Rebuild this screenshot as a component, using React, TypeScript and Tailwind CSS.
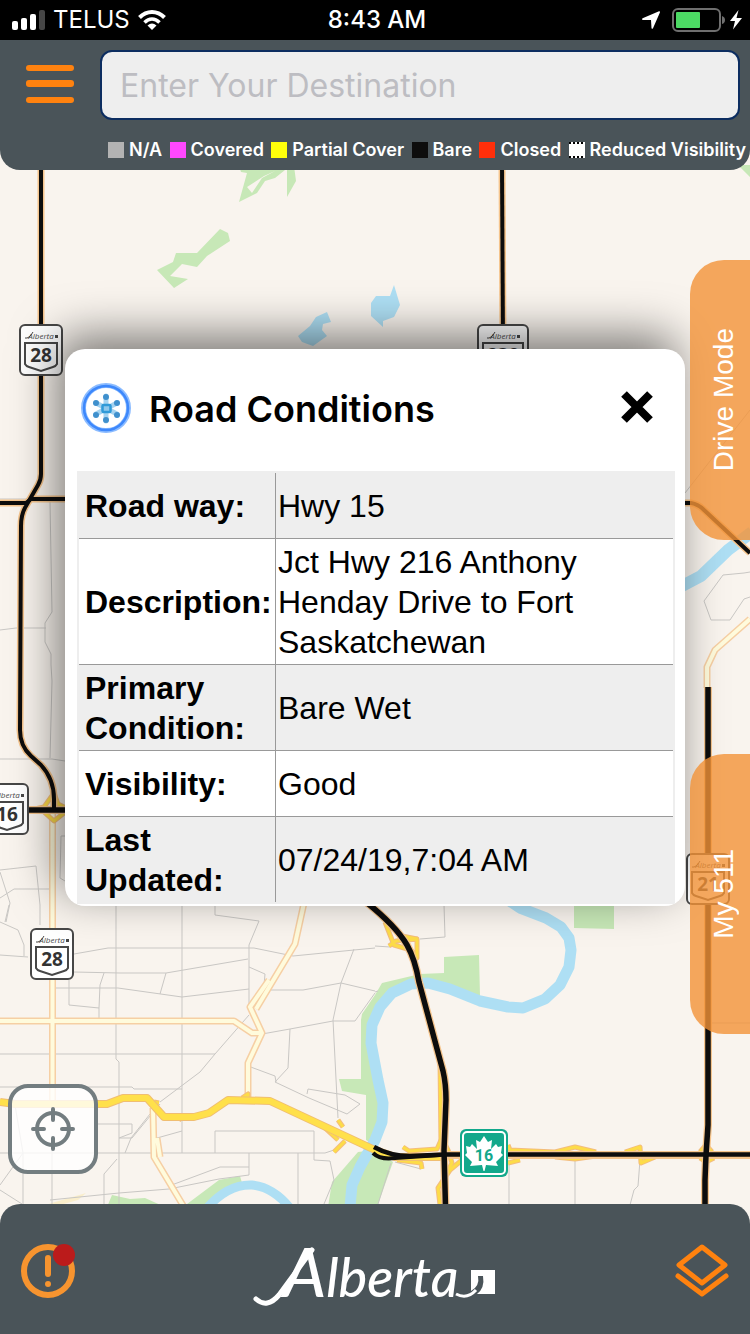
import React from 'react';

const legend = [
  { label: 'N/A', swatch: 'bg-[#b3b3b3]' },
  { label: 'Covered', swatch: 'bg-[#ff48ff]' },
  { label: 'Partial Cover', swatch: 'bg-[#ffff0a]' },
  { label: 'Bare', swatch: 'bg-[#0d0d0d]' },
  { label: 'Closed', swatch: 'bg-[#ff2f0a]' },
  { label: 'Reduced Visibility', swatch: 'bg-white', dashed: true },
];

const details = [
  { label: 'Road way:', value: 'Hwy 15' },
  { label: 'Description:', value: 'Jct Hwy 216 Anthony Henday Drive to Fort Saskatchewan' },
  { label: 'Primary Condition:', value: 'Bare Wet' },
  { label: 'Visibility:', value: 'Good' },
  { label: 'Last Updated:', value: '07/24/19,7:04 AM' },
];

const localRoads = [
  'M0 499H30M50 501L52 612 45 623V642L51 654V665L52 681 50 758',
  'M0 630L16 628H46M0 759H52L65 761',
  'M65 836H61L60 878 65 881M0 870L36 866 40 905V925M0 872L10 903 6 922M0 898L14 889H50',
  'M0 922L18 930 24 945V956M0 955L28 957M9 905L5 922',
  'M74 954L108 948H254L293 956 354 950 375 948M116 905V1059L119 1062V1205M182 905V1153',
  'M215 905V915L259 921 249 945V1007M74 972L120 973H166L248 959M166 973L160 994',
  'M55 988H118L182 997 249 989M69 980V1005L99 1008V1019M99 1008L100 985 104 973',
  'M249 967L265 974 264 985M270 990H303L341 983 375 991M354 949L341 983 333 1020 338 1118',
  'M262 1034L290 1029 333 1021 355 1021 375 993M290 1029L288 1068 275 1082 309 1098',
  'M0 1054H215L249 1015M215 1054L200 1072 160 1102M0 1087H132L134 1089H182',
  'M248 1066L275 1076 276 1082M307 1094L308 1089 345 1095 360 1104 347 1114 309 1098',
  'M98 1124H132V1133L119 1138H132L160 1104M182 1131L157 1138M150 1114L131 1138 125 1153',
  'M215 1153V1131H314V1160L330 1161 334 1180 324 1204M0 1153H325L334 1150M298 1153V1205',
  'M249 1153V1175L219 1179 169 1189 119 1193 50 1200M249 1167H220L169 1186',
  'M104 1205V1174L117 1159M15 1105L23 1153 0 1185M52 1150V1205M0 1190L22 1204M23 1153V1205',
  'M444 905L445 937 420 939M375 946L390 947M375 992L378 991M509 1160V1205M575 1160V1205',
  'M640 1160L638 1186 634 1190 630 1205M395 1162L421 1169M391 1163L378 1204',
  'M685 493L750 410M750 572L744 573 723 575 704 601 711 620H730L744 599 750 597M712 1023H750',
];

const paleRoads = [
  'M52.5 812V1102',
  'M0 1021H234L252 1033H262',
  'M304 903L295 944 256 1009',
  'M269 980L250 1007 262 1033 248 1063V1099',
  'M153 1108L154 1157 184 1207M157 1138L160 1157',
  'M750 619L715 650 707 667V688',
];

const ramps = [
  'M30 810L44 807 54 793 58 804 66 808M44 812L54 821 64 813',
  'M385 922L394 945 411 950 417 958V939L402 936M389 946L396 941 418 939',
  'M375 1152L400 1158 450 1154M403 1147L409 1151 437 1149 442 1138 448 1150 452 1163 446 1175',
  'M397 1160L421 1163 422 1169M440 1205L438 1188 450 1170 462 1160',
  'M508 1145L510 1150 555 1152 575 1147 596 1152M508 1163L520 1160M555 1157L575 1159 596 1156',
  'M625 1152L640 1147 641 1163 655 1157M700 1152L706 1145 712 1152M700 1158L706 1162 714 1158',
  'M325 1128L338 1140M334 1152L345 1141M338 1120L343 1127M242 1098L248 1094 248 1104',
  'M154 1102L159 1103M178 1117L182 1120M440 1060L441 1145',
];

const darkRoads = [
  'M41 165V474Q41 480 38 485L26 506Q21 514 21 526L20 730Q20 746 31 756L41 765Q54 779 54 799V810',
  'M502 165L503 345',
  'M0 503H26L31 499H66',
  'M684 503H691Q698 504 704 510L750 553',
];

const wideDarkRoads = [
  'M28 810H66',
  'M366 902Q396 926 407 945 415 959 419 982L443 1071Q446 1084 446 1100L444 1150 445.5 1207',
  'M708 687L708 1125 706 1155 705 1180V1207',
];

type SignProps = { x: number; y: number; label: string; width?: number };

function HighwaySign({ x, y, label, width = 42 }: SignProps) {
  const half = width / 2;
  const inner = half - 6;
  return (
    <g transform={`translate(${x} ${y})`} fill="#fff" stroke="#474747" strokeWidth="2">
      <rect x={-half} y={-25} width={width} height={50} rx="5" />
      <path d={`M${-inner - 1} -7H${inner + 1}V14Q${inner} 16 ${inner - 3} 17L0 21 ${3 - inner} 17Q${-inner} 16 ${-inner - 1} 14Z`} />
      <path d="M-16 -12Q-12 -11 -8 -18" fill="none" strokeWidth="1" />
      <rect x="14" y="-15" width="3" height="3" fill="#474747" stroke="none" />
      <text x="0" y="-11" textAnchor="middle" fontSize="8" fontStyle="italic" fill="#474747" stroke="none">Alberta</text>
      <text x="0" y="12" textAnchor="middle" fontSize="19" fontWeight="700" fill="#333" stroke="none">{label}</text>
    </g>
  );
}

function RoadMap() {
  return (
    <svg
      className="absolute inset-0 h-full w-full font-['Open_Sans',sans-serif]"
      viewBox="0 0 750 1334"
      preserveAspectRatio="xMidYMid slice"
      fill="none"
      aria-hidden="true"
    >
      <rect width="750" height="1334" fill="#f9f4ee" />

      {/* Parks */}
      <g fill="#c7e8b7">
        <path fillRule="evenodd" d="M239 166L241 172 247 173 239 202 257 193 265 181 275 178 290 166ZM247 187L252 193 262 178 275 171 264 176Z" />
        <path d="M287 166V197L296 181 294 166ZM738 165H750V177Z" />
        <path d="M157 270L173 262 176 253H197L220 229 228 233 230 241 207 256 197 267 182 264 170 276 188 279 174 288Z" />
        <path d="M574 900H614V929L574 928Z" />
        <path d="M361 1020L362 1014 375 995 382 983 420 974 444 973V957L479 955 480 996 440 985 400 987 374 1014 372 1050 382 1100 374 1145 366 1140V1095L342 1091 339 1079H361Z" />
        <path d="M328 1207L332 1182 345 1167 358 1152 375 1150 393 1162 377 1207Z" />
        <path d="M107 1207L112 1195 130 1199 145 1198 165 1207ZM183 1207L219 1180 240 1176 244 1190 284 1207Z" />
      </g>
      <path d="M45 1205L86 1193 78 1200 60 1205Z" fill="#faeecb" />
      <path d="M205 1210L222 1194 240 1187H262L278 1194 290 1210Z" fill="#f9f4ee" />

      {/* Water */}
      <g fill="#aedff4">
        <path d="M298 336L310 326 316 317 327 312 331 322 323 324 322 330 327 336 313 346 302 342Z" />
        <path d="M371 303L376 296H390L394 285 400 305 394 317 383 321V327L371 316Z" />
      </g>
      <g stroke="#aedff4" strokeLinejoin="round">
        <path strokeWidth="11" d="M505 898L520 908 546 918 561 927 569 938 571 950 569 967 560 985 545 999 523 1008 508 1007 480 1001 450 989 428 983 411 984 392 993 380 1007 372 1025 371 1043 378 1080 383 1103 382 1122 375 1140 360 1167 352 1185 350 1207" />
        <path strokeWidth="12" d="M682 586L701 576 728 550 752 532" />
        <path strokeWidth="9" d="M207 1208Q228 1184 252 1185 273 1187 290 1208" />
      </g>

      {/* Local streets */}
      <g stroke="#c9c7c4" strokeWidth="1">
        {localRoads.map((d) => <path key={d} d={d} />)}
      </g>

      {/* Secondary roads */}
      <g stroke="#f6cfa4" strokeWidth="7" strokeLinejoin="round">
        {paleRoads.map((d) => <path key={d} d={d} />)}
      </g>
      <g stroke="#fffbdc" strokeWidth="4" strokeLinejoin="round">
        {paleRoads.map((d) => <path key={d} d={d} />)}
      </g>

      {/* Yellowhead trail and ramps */}
      <g strokeLinejoin="round">
        <g stroke="#f3bd7e" strokeWidth="5">
          {ramps.map((d) => <path key={d} d={d} />)}
        </g>
        <g stroke="#fddc48" strokeWidth="3">
          {ramps.map((d) => <path key={d} d={d} />)}
        </g>
        <path stroke="#f0be72" strokeWidth="8" d="M0 1102L15 1104H107L123 1098H147L164 1117H194L209 1113 228 1100 270 1101 375 1150 395 1157H445" />
        <path stroke="#ffe04a" strokeWidth="6" d="M0 1102L15 1104H107L123 1098H147L164 1117H194L209 1113 228 1100 270 1101 375 1150 395 1157H445" />
      </g>

      {/* Bare pavement highways */}
      <g stroke="#f5c48c" strokeLinejoin="round">
        {darkRoads.map((d) => <path key={d} d={d} strokeWidth="7" />)}
        {wideDarkRoads.map((d) => <path key={d} d={d} strokeWidth="8" />)}
        <path d="M440 1155H750" strokeWidth="8" />
      </g>
      <g stroke="#0d0d0d" strokeLinejoin="round">
        {darkRoads.map((d) => <path key={d} d={d} strokeWidth="4" />)}
        {wideDarkRoads.map((d) => <path key={d} d={d} strokeWidth="5.500" />)}
        <path d="M374 1147Q390 1156 410 1156L445 1154.500H750" strokeWidth="4.500" />
        <path d="M373 1153Q380 1160 395 1158L440 1155" strokeWidth="4" />
      </g>

      <HighwaySign x={41} y={350} label="28" />
      <HighwaySign x={503} y={350} label="830" width={50} />
      <HighwaySign x={7} y={809} label="16" />
      <HighwaySign x={708} y={879} label="21" />
      <HighwaySign x={52} y={954} label="28" />

      {/* Trans-Canada marker */}
      <g transform="translate(460 1129)">
        <rect width="48" height="48" rx="6" fill="#12a88b" />
        <rect x="3" y="3" width="42" height="42" rx="4" stroke="#fff" strokeWidth="2" />
        <path
          fill="#fff"
          d="M24 7L28 13 32 11 31 20 36 15 38 18 42 17 41 24 43 26 36 33 38 37 26 36 24.500 42H23.500L22 36 10 37 12 33 5 26 7 24 6 17 10 18 12 15 17 20 16 11 20 13Z"
        />
        <text x="24" y="32" textAnchor="middle" fontSize="16" fontWeight="700" fill="#12a88b" className="font-['Roboto',sans-serif]">16</text>
      </g>
    </svg>
  );
}

function StatusBar() {
  return (
    <div className="relative grid h-10 grid-cols-3 items-center bg-black px-3 text-2xl text-white">
      <div className="flex items-center gap-2">
        <svg width="33" height="20" viewBox="0 0 33 20" fill="#fff">
          <rect y="11" width="6" height="9" rx="2" />
          <rect x="9" y="8" width="6" height="12" rx="2" />
          <rect x="18" y="4" width="6" height="16" rx="2" />
          <rect x="27" width="6" height="20" rx="2" fill="#464646" />
        </svg>
        <span>TELUS</span>
        <svg width="28" height="20" viewBox="0 0 28 20" fill="none" stroke="#fff" strokeWidth="4">
          <path d="M1.500 7.500Q7 2 14 2T26.500 7.500" />
          <path d="M6.500 12.500Q10 9 14 9T21.500 12.500" strokeWidth="3.500" />
          <path d="M9.500 15.500Q14 11.500 18.500 15.500L14 20Z" fill="#fff" stroke="none" />
        </svg>
      </div>
      <span className="pl-1 text-center font-medium">8:43 AM</span>
      <div className="-mr-1 flex items-center justify-end gap-1">
        <svg className="mr-2" width="18" height="18" viewBox="0 0 18 18" fill="#fff">
          <path d="M17 .3Q18.300 0 17.900 1.500L11 17.200Q10 18.600 9.500 17L9 9H1Q-.8 8.300 .6 7.200Z" />
        </svg>
        <svg width="54" height="24" viewBox="0 0 54 24" fill="none">
          <rect x="1" y="1" width="47" height="22" rx="5" stroke="#6f6f6f" strokeWidth="2" />
          <rect x="4" y="4" width="24" height="16" rx="1" fill="#4cd964" />
          <path d="M50 8Q53 9 53 12T50 16Z" fill="#6f6f6f" />
        </svg>
        <svg width="12" height="20" viewBox="0 0 12 20" fill="#fff">
          <path d="M8.500 0L0 11H5L3 19.500 12 8H6.500Z" />
        </svg>
      </div>
    </div>
  );
}

function AlbertaLogo() {
  return (
    <svg width="240" height="64" viewBox="0 0 240 64" role="img" aria-label="Alberta" className="overflow-visible font-['Lato',sans-serif]">
      <path d="M1 55Q12 65 24 51L57 6" fill="none" stroke="#fff" strokeWidth="5" strokeLinecap="round" />
      <text x="28" y="53" fontStyle="italic" fontWeight="500" fill="#fff">
        <tspan fontSize="68">A</tspan>
        <tspan fontSize="54">lberta</tspan>
      </text>
      <path d="M216 26H240V50H222Q230 44 228 32H223Q225 42 216 47Z" fill="#fff" />
      <path d="M201 50Q212 56 221 46" fill="none" stroke="#fff" strokeWidth="3" />
    </svg>
  );
}

function SnowflakeBadge() {
  return (
    <svg width="50" height="50" viewBox="0 0 50 50" fill="none" aria-hidden="true">
      <circle cx="25" cy="25" r="22.500" stroke="#8cbcff" strokeWidth="5" />
      <circle cx="25" cy="25" r="22" stroke="#3d88fc" strokeWidth="2.500" />
      <g stroke="#a5d3f0" strokeWidth="5" strokeLinecap="round">
        <path d="M25 13V38M15 20L36 31M15 31L36 20" />
      </g>
      <g fill="#3f90cd">
        <circle cx="25" cy="14" r="3" />
        <circle cx="25" cy="37" r="3" />
        <circle cx="15" cy="20" r="3" />
        <circle cx="36" cy="20" r="3" />
        <circle cx="15" cy="32" r="3" />
        <circle cx="36" cy="32" r="3" />
      </g>
      <rect x="21.500" y="22" width="8" height="7" rx="1" fill="#8fc8ec" stroke="#2f9ad8" strokeWidth="2.500" />
    </svg>
  );
}

function RoadConditionsCard() {
  return (
    <section className="overflow-hidden rounded-[20px] bg-white pr-[10px] pb-[2px] pl-3 shadow-[-8px_-14px_46px_rgba(0,0,0,0.5)]">
      <div className="mb-1 flex h-[118px] items-center pr-5 pl-1">
        <SnowflakeBadge />
        <h2 className="ml-[18px] flex-1 pt-[2px] text-4xl font-semibold text-black">Road Conditions</h2>
        <button type="button" aria-label="Close">
          <svg width="36" height="36" viewBox="0 0 36 36" stroke="#000" strokeWidth="7" strokeLinejoin="round">
            <path d="M5 4L31 30M31 4L5 30" strokeWidth="8" />
          </svg>
        </button>
      </div>

      <table className="w-full border-separate border-spacing-0 border-2 border-[#eeeeee] font-['Liberation_Sans',Arial,sans-serif] text-[32px] leading-10 text-black">
        <tbody>
          {details.map((row) => (
            <tr key={row.label} className="group odd:bg-[#eeeeee]">
              <th scope="row" className="h-[66px] w-[196px] border-b border-[#999999] pt-[3px] pb-[2px] pl-[6px] text-left font-bold group-last:border-b-0">
                {row.label}
              </th>
              <td className="border-b border-l border-[#999999] pt-[3px] pr-14 pb-[2px] pl-[2px] group-last:border-b-0">
                {row.value}
              </td>
            </tr>
          ))}
        </tbody>
      </table>
    </section>
  );
}

function SideTab({ label, className }: { label: string; className: string }) {
  return (
    <button
      type="button"
      className={`absolute right-0 flex h-[280px] w-[60px] items-center justify-center rounded-l-[34px] bg-[#f39237]/80 pl-2 font-['Liberation_Sans',Arial,sans-serif] text-[28px] text-white ${className}`}
    >
      <span className="rotate-180 whitespace-nowrap [writing-mode:vertical-rl]">{label}</span>
    </button>
  );
}

export default function App() {
  return (
    <div className="relative flex min-h-screen flex-col overflow-hidden font-['Inter',sans-serif]">
      <RoadMap />

      <StatusBar />

      <header className="relative h-[130px] rounded-b-[20px] bg-[#4a5459] pt-[10px]">
        <div className="flex items-center pr-[10px] pl-[26px]">
          <button type="button" aria-label="Menu" className="mr-[26px]">
            <svg width="48" height="40" viewBox="0 0 48 40" fill="#ff820f">
              <rect width="48" height="6" rx="3" />
              <rect y="15" width="48" height="7" rx="3" />
              <rect y="32" width="48" height="6" rx="3" />
            </svg>
          </button>
          <input
            type="text"
            aria-label="Destination"
            placeholder="Enter Your Destination"
            className="h-[70px] min-w-0 flex-1 rounded-[12px] border-2 border-[#0c2d60] bg-[#eeeeee] px-[18px] text-[32px] text-black placeholder:text-[#bdbdc2]"
          />
        </div>
        <ul className="mt-[18px] flex items-center justify-between pr-1 pl-[108px] text-[18px] leading-6 font-semibold text-white">
          {legend.map((item) => (
            <li key={item.label} className="flex items-center gap-[5px] whitespace-nowrap">
              <span className={`h-4 w-4 ${item.swatch}`}>
                {item.dashed && (
                  <svg width="16" height="16" viewBox="0 0 16 16" stroke="#000" strokeWidth="2" strokeDasharray="2 2" aria-hidden="true">
                    <path d="M0 1H16M0 15H16" />
                  </svg>
                )}
              </span>
              {item.label}
            </li>
          ))}
        </ul>
      </header>

      <main className="relative flex-1 px-[65px] pt-[179px] pb-[120px]">
        <RoadConditionsCard />

        <SideTab label="Drive Mode" className="top-[90px]" />
        <SideTab label="My 511" className="top-[584px]" />

        <button
          type="button"
          aria-label="My location"
          className="absolute bottom-[30px] left-2 flex h-[90px] w-[90px] items-center justify-center rounded-[20px] border-4 border-[#737d80] bg-white/80"
        >
          <svg width="44" height="44" viewBox="0 0 44 44" fill="none" stroke="#737d80" strokeWidth="4">
            <circle cx="22" cy="22" r="16" />
            <path d="M22 2V13M22 31V42M2 22H13M31 22H42" strokeLinecap="round" />
          </svg>
        </button>
      </main>

      <footer className="relative flex h-[130px] items-start justify-between rounded-t-[20px] bg-[#4a5459] px-5 pt-10">
        <button type="button" aria-label="Alerts">
          <svg width="56" height="56" viewBox="0 0 56 56" fill="none">
            <circle cx="28" cy="27" r="24" stroke="#f7942f" strokeWidth="6" />
            <path d="M28 14V30" stroke="#f7942f" strokeWidth="6" strokeLinecap="round" />
            <circle cx="28" cy="40" r="3" fill="#f7942f" />
            <circle cx="44" cy="11" r="11" fill="#bb1b1b" />
          </svg>
        </button>
        <AlbertaLogo />
        <button type="button" aria-label="Map layers">
          <svg width="56" height="56" viewBox="0 0 56 56" fill="none" stroke="#ff820f" strokeWidth="5" strokeLinecap="round" strokeLinejoin="round">
            <path d="M28 3L51 21 28 39 5 21Z" />
            <path d="M4 32L28 50 52 32" />
          </svg>
        </button>
      </footer>
    </div>
  );
}
